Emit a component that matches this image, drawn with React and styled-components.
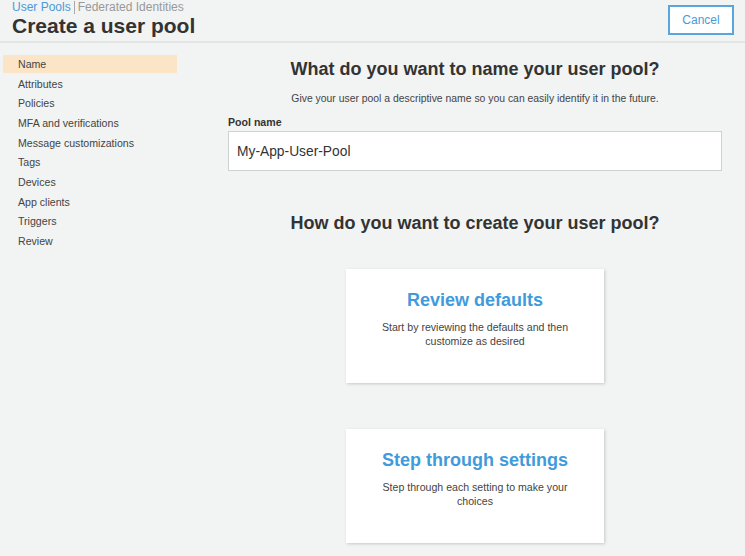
import React from 'react';
import styled, { createGlobalStyle } from 'styled-components';

const GlobalStyle = createGlobalStyle`
  html, body {
    margin: 0;
    padding: 0;
    background: #f2f3f3;
    font-family: "Liberation Sans", Arial, sans-serif;
    color: #333;
  }
`;

const Page = styled.div`
  width: 745px;
  height: 556px;
  overflow: hidden;
  background: #f2f3f3;
`;

const Header = styled.header`
  height: 43px;
  border-bottom: 2px solid #e3e5e5;
  padding: 0 11px 0 12px;
  display: flex;
  justify-content: space-between;
  align-items: flex-start;
  box-sizing: border-box;
`;

const TitleBlock = styled.div`
  display: flex;
  flex-direction: column;
`;

const Breadcrumb = styled.div`
  font-size: 12px;
  line-height: 14px;
  color: #999;
  display: flex;
  align-items: center;

  a {
    color: #4a9ad8;
    text-decoration: none;
  }
`;

const Divider = styled.span`
  display: inline-block;
  width: 1px;
  height: 13px;
  background: #aaa;
  margin: 0 3px 0 3px;
`;

const PageTitle = styled.h1`
  margin: 0;
  font-size: 21px;
  line-height: 24px;
  font-weight: bold;
  color: #333;
`;

const CancelButton = styled.button`
  margin-top: 5px;
  width: 66px;
  height: 30px;
  background: #fff;
  border: 2px solid #5ba5de;
  color: #4a9ad8;
  font-family: inherit;
  font-size: 12px;
  cursor: pointer;
`;

const Body = styled.div`
  display: flex;
`;

const Sidebar = styled.nav`
  width: 174px;
  padding: 12px 0 0 3px;
  display: flex;
  flex-direction: column;
`;

const NavItem = styled.div`
  height: 18px;
  line-height: 18px;
  margin-bottom: 1.67px;
  padding-left: 15px;
  font-size: 10.6px;
  color: #444;
  background: ${props => (props.active ? '#fbe5c6' : 'transparent')};
`;

const Main = styled.main`
  width: 494px;
  margin-left: 51px;
  padding-top: 15px;
  display: flex;
  flex-direction: column;
  align-items: center;
`;

const Question = styled.h2`
  margin: 0;
  font-size: 18px;
  line-height: 22px;
  font-weight: bold;
  color: #333;
  text-align: center;
`;

const Hint = styled.p`
  margin: 12px 0 0;
  font-size: 10.4px;
  line-height: 14px;
  color: #444;
  text-align: center;
`;

const Field = styled.label`
  align-self: stretch;
  margin-top: 9px;
  display: flex;
  flex-direction: column;
  gap: 2px;
`;

const FieldLabel = styled.span`
  font-size: 10.6px;
  line-height: 14px;
  font-weight: bold;
  color: #333;
`;

const TextInput = styled.input`
  height: 40px;
  box-sizing: border-box;
  border: 1px solid #cfd2d2;
  background: #fff;
  padding: 0 8px;
  font-family: inherit;
  font-size: 13.8px;
  color: #333;
  outline: none;
`;

const CreateQuestion = styled(Question)`
  margin-top: 41px;
`;

const Cards = styled.div`
  margin-top: 35px;
  display: flex;
  flex-direction: column;
  gap: 46px;
`;

const Card = styled.div`
  width: 258px;
  height: 114px;
  box-sizing: border-box;
  background: #fff;
  box-shadow: 1px 1px 3px rgba(0, 0, 0, 0.18);
  padding: 20px 30px 0;
  text-align: center;
  cursor: pointer;
`;

const CardTitle = styled.div`
  font-size: 18px;
  line-height: 22px;
  font-weight: bold;
  color: #3f9bdb;
`;

const CardText = styled.div`
  margin-top: 9px;
  font-size: 10.6px;
  line-height: 14px;
  color: #444;
`;

const navItems = [
  'Name',
  'Attributes',
  'Policies',
  'MFA and verifications',
  'Message customizations',
  'Tags',
  'Devices',
  'App clients',
  'Triggers',
  'Review',
];

const options = [
  {
    title: 'Review defaults',
    text: 'Start by reviewing the defaults and then customize as desired',
  },
  {
    title: 'Step through settings',
    text: 'Step through each setting to make your choices',
  },
];

export default function App() {
  return (
    <Page>
      <GlobalStyle />
      <Header>
        <TitleBlock>
          <Breadcrumb>
            <a href="#">User Pools</a>
            <Divider />
            <span>Federated Identities</span>
          </Breadcrumb>
          <PageTitle>Create a user pool</PageTitle>
        </TitleBlock>
        <CancelButton>Cancel</CancelButton>
      </Header>
      <Body>
        <Sidebar>
          {navItems.map((item, i) => (
            <NavItem key={item} active={i === 0}>
              {item}
            </NavItem>
          ))}
        </Sidebar>
        <Main>
          <Question>What do you want to name your user pool?</Question>
          <Hint>Give your user pool a descriptive name so you can easily identify it in the future.</Hint>
          <Field>
            <FieldLabel>Pool name</FieldLabel>
            <TextInput defaultValue="My-App-User-Pool" />
          </Field>
          <CreateQuestion>How do you want to create your user pool?</CreateQuestion>
          <Cards>
            {options.map(opt => (
              <Card key={opt.title}>
                <CardTitle>{opt.title}</CardTitle>
                <CardText>{opt.text}</CardText>
              </Card>
            ))}
          </Cards>
        </Main>
      </Body>
    </Page>
  );
}
